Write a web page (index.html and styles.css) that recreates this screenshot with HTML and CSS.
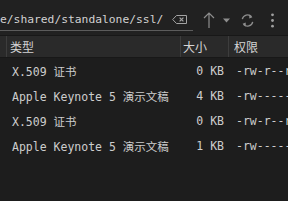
FILE: index.html
```html
<!DOCTYPE html>
<html lang="zh-CN">
<head>
<meta charset="utf-8">
<link rel="stylesheet" href="styles.css">
</head>
<body>
<div class="app">
  <div class="toolbar">
    <div class="pathfield">
      <span class="path">e/shared/standalone/ssl/</span>
      <svg class="icon clear" width="15" height="9" viewBox="0 0 15 9">
        <path d="M4.5 0.5 H14.5 V8.5 H4.5 L0.7 4.5 Z" fill="none" stroke="#a3a3a3" stroke-width="1"/>
        <path d="M7.6 2.6 L11.4 6.4 M11.4 2.6 L7.6 6.4" stroke="#a3a3a3" stroke-width="1.2"/>
      </svg>
    </div>
    <div class="actions">
      <svg class="icon up" width="12" height="16" viewBox="0 0 12 16">
        <path d="M6 1 V16 M1 6 L6 1 L11 6" fill="none" stroke="#8e8e8e" stroke-width="1.2"/>
      </svg>
      <svg class="icon caret" width="7" height="5" viewBox="0 0 7 5">
        <path d="M0 0.5 H7 L3.5 4.5 Z" fill="#8e8e8e"/>
      </svg>
      <svg class="icon refresh" width="15" height="15" viewBox="0 0 15 15">
        <path d="M11.6 3.6 A5.4 5.4 0 0 0 2.3 6.2" fill="none" stroke="#8e8e8e" stroke-width="1.3"/>
        <path d="M3.4 11.4 A5.4 5.4 0 0 0 12.7 8.8" fill="none" stroke="#8e8e8e" stroke-width="1.3"/>
        <path d="M9.2 1.6 L12.4 4.2 L9.3 5.6 Z" fill="#8e8e8e"/>
        <path d="M5.8 13.4 L2.6 10.8 L5.7 9.4 Z" fill="#8e8e8e"/>
      </svg>
      <svg class="icon more" width="5" height="15" viewBox="0 0 5 15">
        <circle cx="2.5" cy="1.8" r="1.4" fill="#a0a0a0"/>
        <circle cx="2.5" cy="7.5" r="1.4" fill="#a0a0a0"/>
        <circle cx="2.5" cy="13.2" r="1.4" fill="#a0a0a0"/>
      </svg>
    </div>
  </div>
  <div class="header">
    <div class="hcell c0"></div>
    <div class="hcell ctype">类型</div>
    <div class="hcell csize">大小</div>
    <div class="hcell cperm">权限</div>
  </div>
  <div class="rows">
    <div class="row"><span class="type">X.509 证书</span><span class="size">0 KB</span><span class="perm">-rw-r--r--</span></div>
    <div class="row"><span class="type">Apple Keynote 5 演示文稿</span><span class="size">4 KB</span><span class="perm">-rw-------</span></div>
    <div class="row"><span class="type">X.509 证书</span><span class="size">0 KB</span><span class="perm">-rw-r--r--</span></div>
    <div class="row"><span class="type">Apple Keynote 5 演示文稿</span><span class="size">1 KB</span><span class="perm">-rw-------</span></div>
  </div>
</div>
</body>
</html>
```

FILE: styles.css
```css
html, body {
  margin: 0;
  padding: 0;
  background: #1d1d1d;
}

.app {
  width: 288px;
  height: 201px;
  overflow: hidden;
  background: #1d1d1d;
  color: #cfcfcf;
}

.toolbar {
  height: 35px;
  display: flex;
  align-items: flex-start;
  background: #212121;
}

.pathfield {
  width: 193px;
  height: 31px;
  border-bottom: 1px solid #5c5c5c;
  display: flex;
  align-items: center;
  box-sizing: border-box;
  padding-top: 9px;
}

.path {
  flex: 1;
  min-width: 0;
  overflow: hidden;
  white-space: nowrap;
  font-family: "DejaVu Sans Mono", monospace;
  font-size: 11.3px;
  line-height: 14px;
  color: #d2d2d2;
}

.icon {
  display: block;
  flex: none;
}

.clear {
  margin-right: 6px;
}

.actions {
  display: flex;
  align-items: center;
  height: 35px;
  padding-top: 5px;
  box-sizing: border-box;
}

.up {
  margin-left: 10px;
}

.caret {
  margin-left: 8px;
}

.refresh {
  margin-left: 10px;
}

.more {
  margin-left: 15px;
}

.header {
  display: flex;
  height: 23px;
  box-sizing: border-box;
  border-top: 1px solid #181818;
  border-bottom: 1px solid #181818;
  background: #2a2a2a;
  font-family: "Noto Sans CJK SC", sans-serif;
  font-size: 12px;
  line-height: 21px;
  color: #d4d4d4;
}

.hcell {
  flex: none;
  box-sizing: border-box;
  border-right: 1px solid #3d3d3d;
  white-space: nowrap;
}

.c0 {
  width: 7px;
}

.ctype {
  width: 174px;
  padding-left: 3px;
}

.csize {
  width: 48px;
  padding-left: 2px;
}

.cperm {
  flex: 1;
  border-right: none;
  padding-left: 5px;
}

.rows {
  display: flex;
  flex-direction: column;
}

.row {
  display: flex;
  align-items: center;
  height: 25px;
  font-family: "DejaVu Sans Mono", "Noto Sans CJK SC", monospace;
  font-size: 11.5px;
  white-space: nowrap;
  color: #cdcdcd;
}

.type {
  flex: none;
  width: 181px;
  padding-left: 12px;
  box-sizing: border-box;
  overflow: hidden;
}

.size {
  flex: none;
  width: 48px;
  padding-right: 5px;
  box-sizing: border-box;
  text-align: right;
}

.perm {
  flex: none;
  padding-left: 7px;
}
```
